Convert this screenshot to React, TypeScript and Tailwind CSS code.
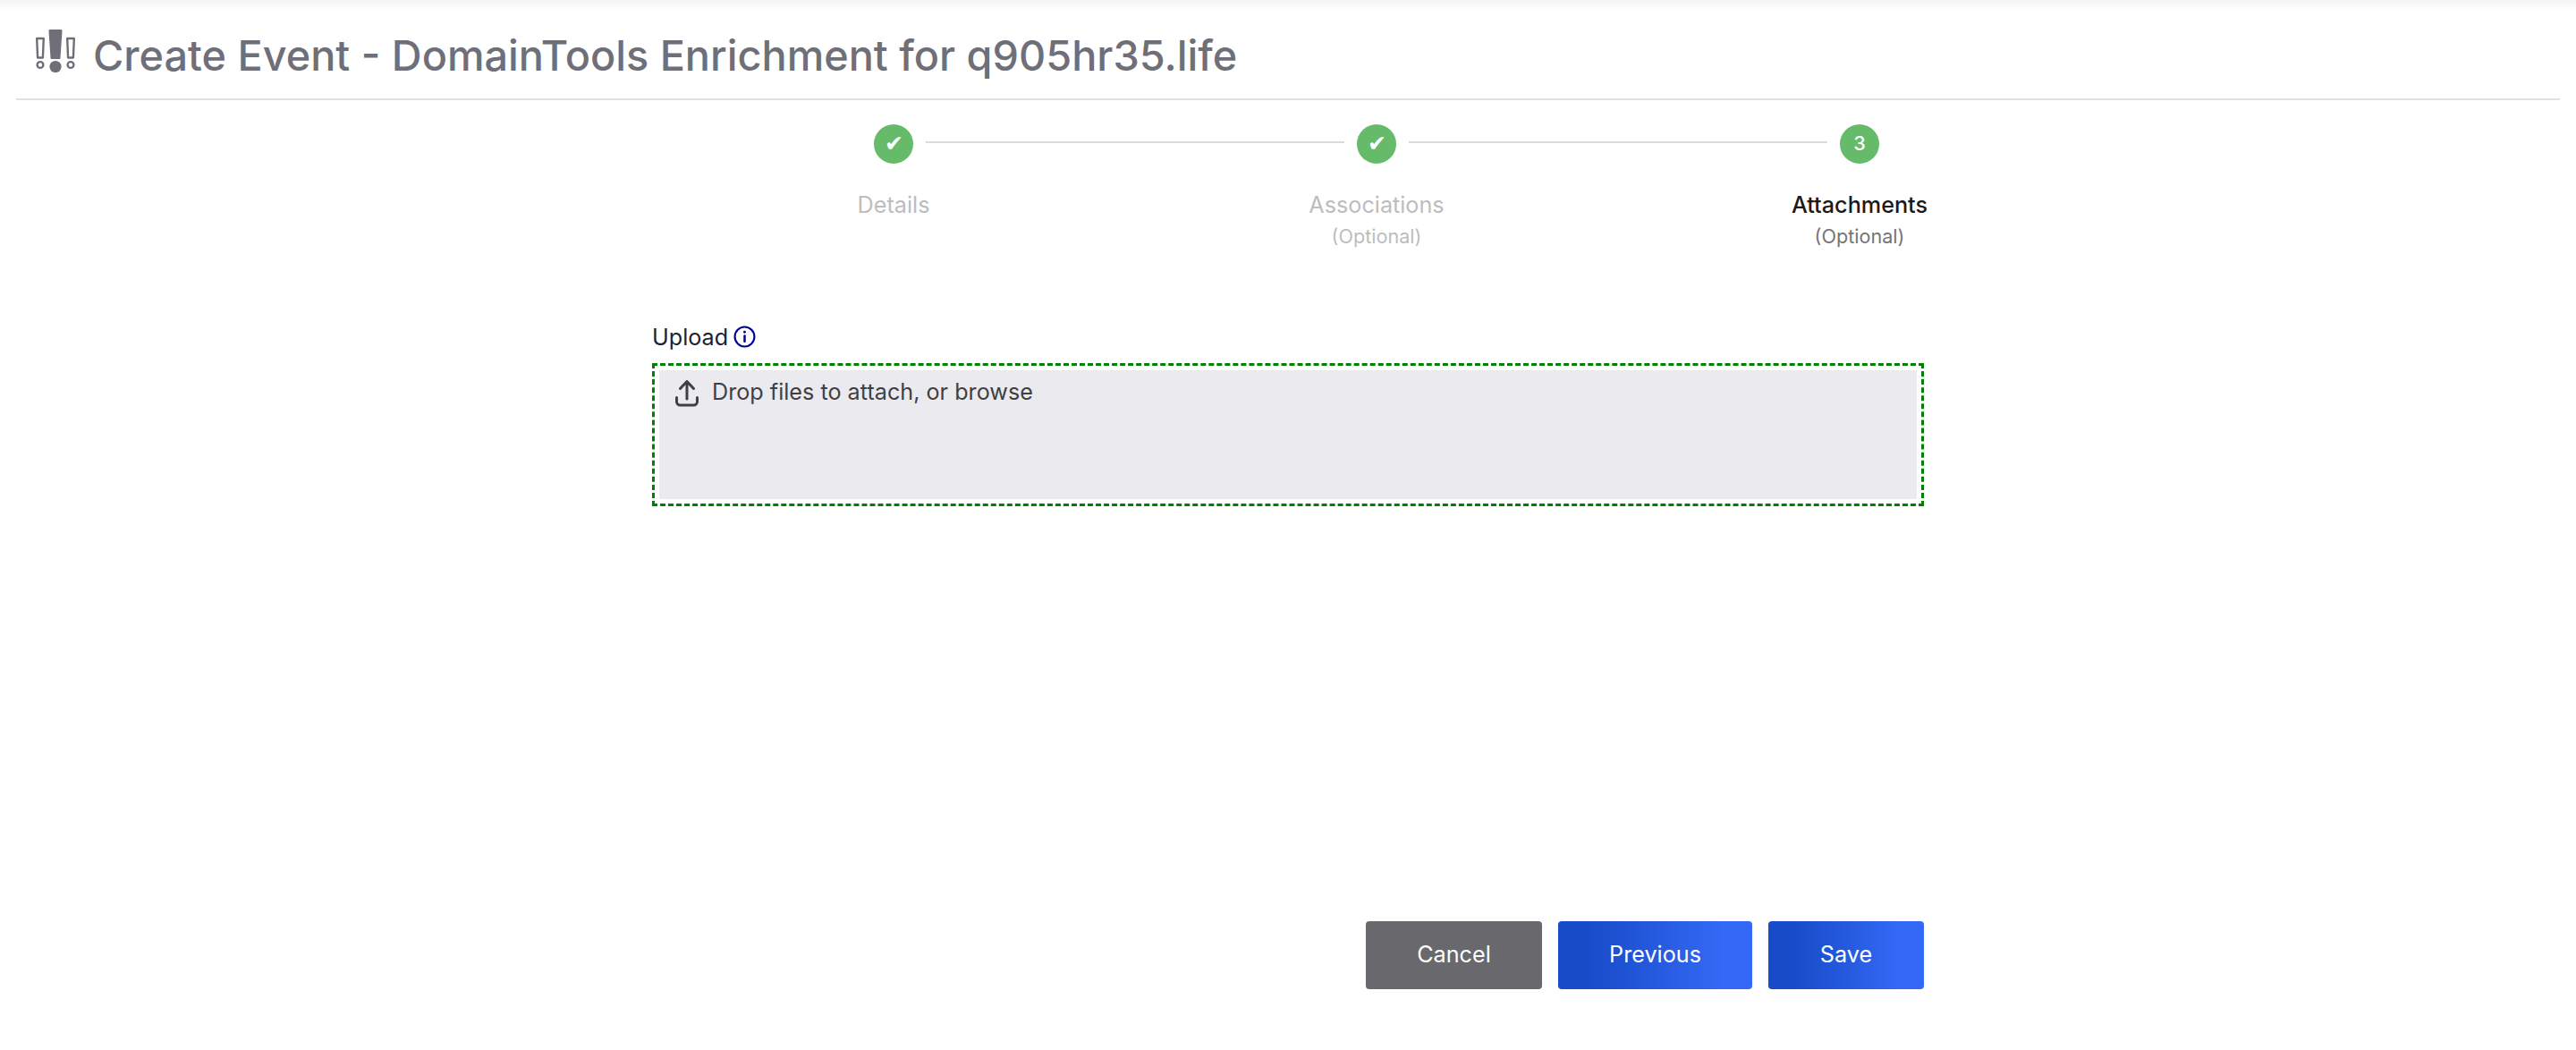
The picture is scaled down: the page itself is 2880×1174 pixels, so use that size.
const font = "font-['Inter','Liberation_Sans',sans-serif]";

function AlertIcon() {
  return (
    <svg width="44" height="48" viewBox="0 0 44 48" className="shrink-0">
      <path d="M1.2 10h7.6l-.9 21.5H2.1Z" fill="#fff" stroke="#6f6f7a" strokeWidth="2.4" strokeLinejoin="round" />
      <circle cx="5" cy="39.5" r="3.4" fill="#fff" stroke="#6f6f7a" strokeWidth="2.4" />
      <path d="M16 0h12a1.5 1.5 0 0 1 1.5 1.6L27.5 32a1 1 0 0 1-1 1h-9a1 1 0 0 1-1-1L14.5 1.6A1.5 1.5 0 0 1 16 0Z" fill="#6f6f7a" />
      <circle cx="22" cy="41.5" r="6.6" fill="#6f6f7a" />
      <path d="M35.2 10h7.6l-.9 21.5h-5.8Z" fill="#fff" stroke="#6f6f7a" strokeWidth="2.4" strokeLinejoin="round" />
      <circle cx="39" cy="39.5" r="3.4" fill="#fff" stroke="#6f6f7a" strokeWidth="2.4" />
    </svg>
  );
}

function Step({ mark, title, sub, state, line, big }: { mark: string; title: string; sub?: string; state: "done" | "active"; line?: boolean; big?: boolean }) {
  return (
    <div className="relative flex w-[540px] flex-col items-center">
      <div className={`flex size-[44px] items-center justify-center rounded-full bg-[#66bb6a] leading-none font-medium text-white ${big ? "text-[25.2px]" : "text-[21.6px]"}`}>{mark}</div>
      {line && <div className="absolute top-[19px] left-[306px] h-[2px] w-[468px] bg-[#dadada]" />}
      <div className={`mt-[28px] text-[25.2px] leading-[36px] ${state === "done" ? "font-normal text-[#bdbdbd]" : "font-medium text-[#1a1a1a]"}`}>{title}</div>
      {sub && <div className={`mt-[2px] text-[21.6px] leading-[30px] ${state === "done" ? "text-[#bdbdbd]" : "text-[#757575]"}`}>{sub}</div>}
    </div>
  );
}

export default function App() {
  return (
    <div className={`${font} flex h-[1174px] flex-col bg-white`}>
      <div className="h-[12px] bg-gradient-to-b from-[#f5f5f5] to-white" />
      <div className="mx-[18px] flex h-[100px] items-start gap-[20px] border-b-2 border-[#e0e0e0] pt-[21px] pl-[22px]">
        <AlertIcon />
        <h1 className="mt-[1px] text-[46.8px] leading-[56px] font-medium text-[#6f6f7a]">Create Event - DomainTools Enrichment for q905hr35.life</h1>
      </div>
      <div className="ml-[729px] flex w-[1620px] pt-[27px]">
        <Step mark="✔" big title="Details" state="done" line />
        <Step mark="✔" big title="Associations" sub="(Optional)" state="done" line />
        <Step mark="3" title="Attachments" sub="(Optional)" state="active" />
      </div>
      <div className="ml-[729px] flex w-[1422px] grow flex-col">
        <div className="mt-[80px] flex items-center gap-[6px] text-[25.2px] leading-[36px] text-[#1a2233]">
          Upload
          <svg width="25" height="25" viewBox="0 0 24 24" fill="none" stroke="#000099" strokeWidth="2" strokeLinecap="round" className="-translate-y-px">
            <circle cx="12" cy="12" r="10.5" />
            <path d="M12 11v6" strokeWidth="2.4" />
            <circle cx="12" cy="7" r="1.4" fill="#000099" stroke="none" />
          </svg>
        </div>
        <div className="mt-[11px] border-[3px] border-dashed border-[#008000] p-[5px]">
          <div className="flex h-[144px] items-start gap-[11px] bg-[#ebebef] pt-[8px] pl-[12px]">
            <svg width="36" height="36" viewBox="0 0 36 36" fill="none" stroke="#3f3f46" strokeWidth="3" strokeLinecap="round" strokeLinejoin="round" className="shrink-0">
              <path d="M19 24V4.5M11.5 12.5 19 4.5l7.5 8" />
              <path d="M7.5 22.5v4.5a4 4 0 0 0 4 4h15a4 4 0 0 0 4-4v-4.5" />
            </svg>
            <span className="text-[25.2px] leading-[32px] text-[#3f3f46]">Drop files to attach, or browse</span>
          </div>
        </div>
        <div className="mt-[464px] flex justify-end gap-[18px]">
          <button className="h-[76px] w-[197px] rounded-[4px] bg-[#68686d] text-[25.2px] font-normal text-white">Cancel</button>
          <button className="h-[76px] w-[217px] rounded-[4px] bg-gradient-to-r from-[#174bc8] from-15% to-[#3369f6] to-85% text-[25.2px] font-normal text-white">Previous</button>
          <button className="h-[76px] w-[174px] rounded-[4px] bg-gradient-to-r from-[#174bc8] from-15% to-[#3369f6] to-85% text-[25.2px] font-normal text-white">Save</button>
        </div>
      </div>
    </div>
  );
}
